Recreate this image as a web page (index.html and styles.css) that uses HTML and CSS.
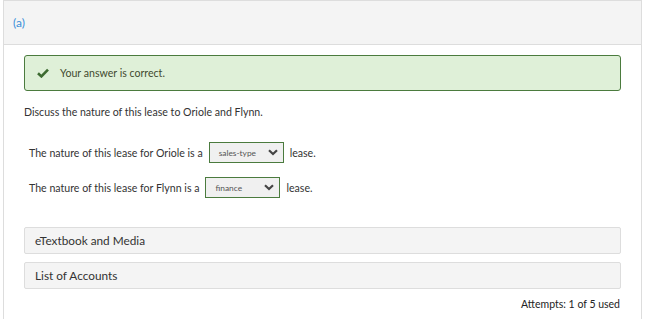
FILE: index.html
```html
<!DOCTYPE html>
<html lang="en">
<head>
  <meta charset="UTF-8" /><meta name="viewport" content="width=device-width, initial-scale=1.0" />
  <title>Question (a)</title>
  <link rel="stylesheet" href="styles.css">
</head>
<body>
  <div class="panel">
    <div class="panel-head"><span class="part">(a)</span></div>
    <div class="panel-body">
      <div class="alert">
        <svg class="check" width="12" height="10" viewBox="0 0 12 10"><path d="M1 5.2 L4.4 8.4 L11 1.6" fill="none" stroke="#3d6b31" stroke-width="2.6"/></svg>
        <span>Your answer is correct.</span>
      </div>
      <p class="intro">Discuss the nature of this lease to Oriole and Flynn.</p>

      <div class="row">
        <span>The nature of this lease for Oriole is a</span>
        <div class="select"><span>sales-type</span>
          <svg width="10" height="7" viewBox="0 0 10 7"><path d="M1 1.3 L5 5 L9 1.3" fill="none" stroke="#444" stroke-width="2.2"/></svg>
        </div>
        <span>lease.</span>
      </div>
      <div class="row">
        <span>The nature of this lease for Flynn is a</span>
        <div class="select"><span>finance</span>
          <svg width="10" height="7" viewBox="0 0 10 7"><path d="M1 1.3 L5 5 L9 1.3" fill="none" stroke="#444" stroke-width="2.2"/></svg>
        </div>
        <span>lease.</span>
      </div>

      <div class="extras">
        <div class="bar">eTextbook and Media</div>
        <div class="bar">List of Accounts</div>
      </div>
      <div class="attempts">Attempts: 1 of 5 used</div>
    </div>
  </div>
</body>
</html>
```

FILE: styles.css
```css
body { margin: 0; font-family: Lato, "Open Sans", sans-serif; color: #333; background: #fff; }
.panel { margin-left: 3px; width: 637px; border: 1px solid #ddd; border-bottom: none; height: 330px; }
.panel-head { background: #f4f4f4; border-bottom: 1px solid #ddd; height: 43px; display: flex; align-items: center; padding-left: 9px; }
.part { color: #3a8fd9; font-size: 12px; }
.panel-body { padding: 10px 20px 0 20px; }
.alert { height: 34px; border: 1px solid #4b7b3e; border-radius: 3px; background: #dff0d8; display: flex; align-items: center; font-size: 10.6px; color: #3f4a2f; }
.alert .check { margin: 0 11px 0 12px; }
.intro { margin: 14px 0 0 0; font-size: 10.6px; line-height: 14px; }
.row { display: flex; align-items: center; height: 21px; margin-top: 14px; padding-left: 5px; font-size: 10.6px; }
.intro + .row { margin-top: 23px; }
.select { height: 19px; margin: 0 6px 0 6px; border: 1px solid #4b7b3e; background: #f0f0f0; display: flex; align-items: center; justify-content: space-between; padding: 0 5px 0 9px; width: 59px; font-size: 8.4px; color: #555; }
.extras { margin-top: 29px; }
.bar { height: 25px; line-height: 25px; border: 1px solid #ddd; border-radius: 2px; background: #f4f4f4; padding-left: 10px; font-size: 11.8px; margin-bottom: 8px; }
.attempts { text-align: right; font-size: 10.5px; line-height: 14px; color: #222; padding-right: 1px; }
```
